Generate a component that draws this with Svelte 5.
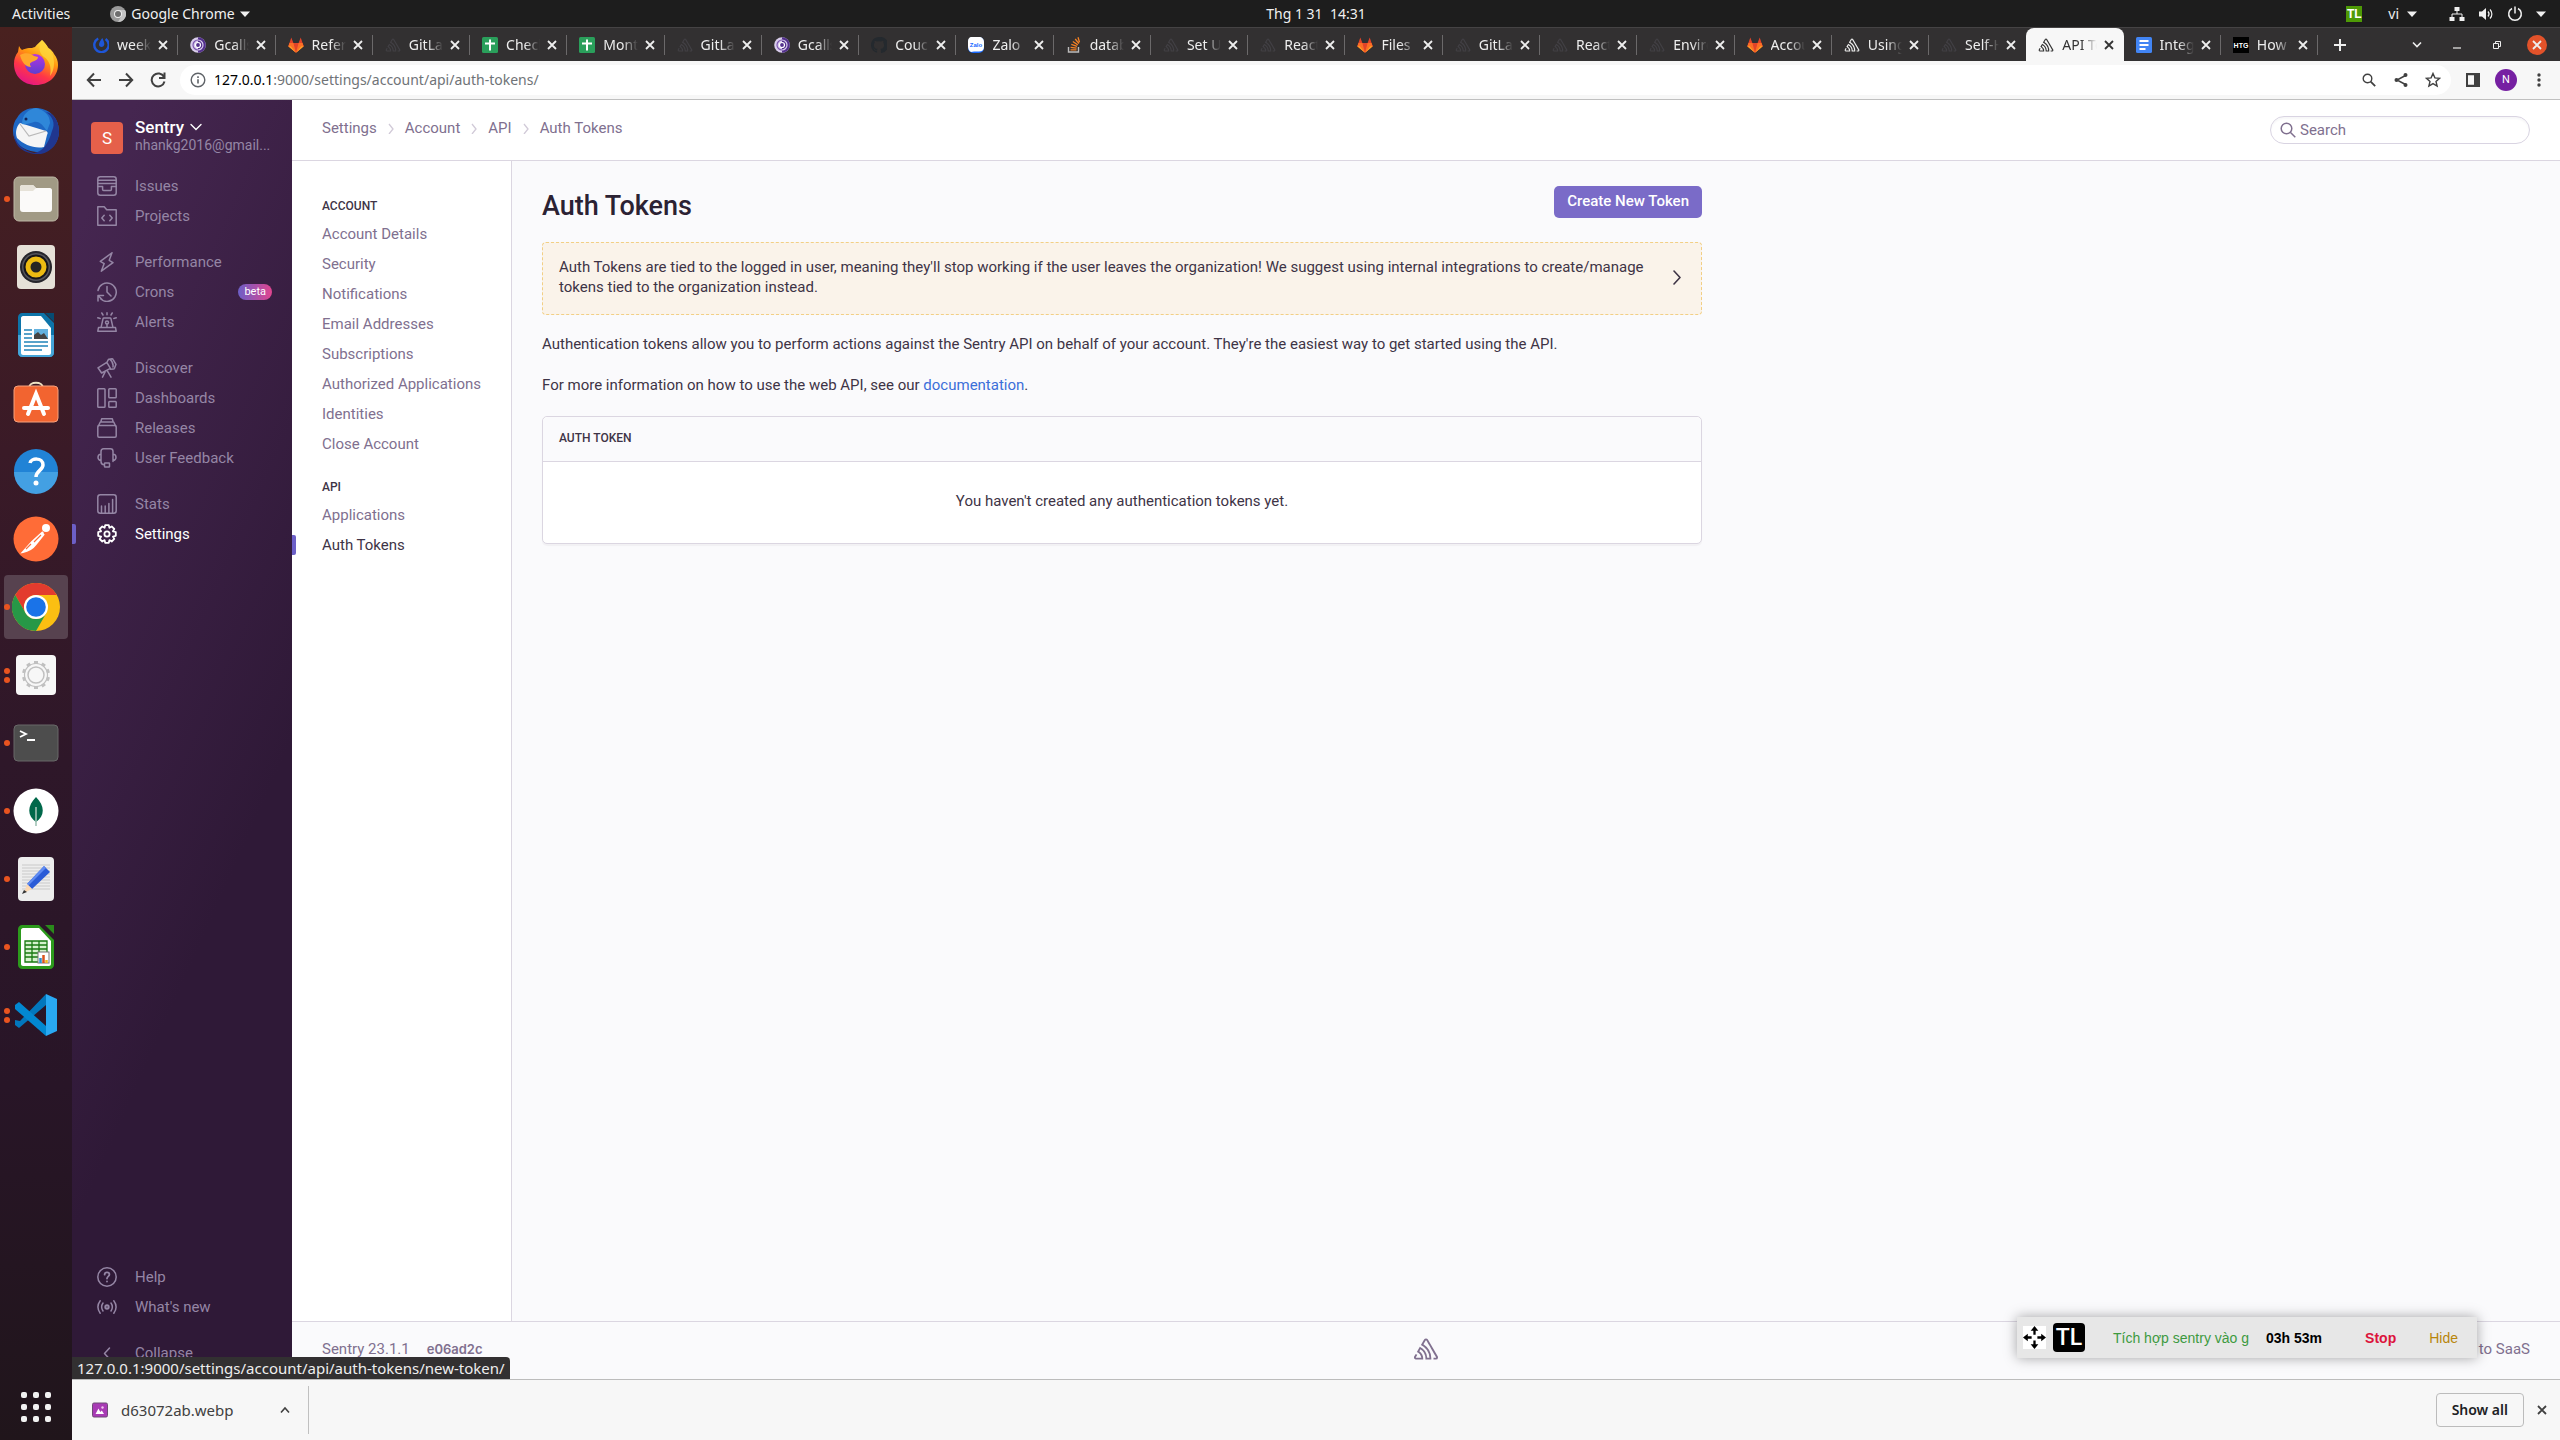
<script>
  const tabs = [
    ['mattermost', 'weekly'], ['gcall', 'Gcalls'], ['gitlab', 'Refere'], ['sentry-dark', 'GitLab'],
    ['sheets', 'Check'], ['sheets', 'Month'], ['sentry-dark', 'GitLab'], ['gcall', 'Gcalls'],
    ['github', 'Couch'], ['zalo', 'Zalo'], ['stack', 'datab'], ['sentry-dark', 'Set Up'],
    ['sentry-dark', 'React'], ['gitlab', 'Files'], ['sentry-dark', 'GitLab'], ['sentry-dark', 'React'],
    ['sentry-dark', 'Enviro'], ['gitlab', 'Accou'], ['sentry', 'Using'], ['sentry-dark', 'Self-H'],
    ['sentry', 'API To'], ['docs', 'Integr'], ['htg', 'How t']
  ];
  const activeTab = 20;

  const apps = [
    ['firefox', 'Firefox', 0], ['thunderbird', 'Thunderbird', 0], ['files', 'Files', 1],
    ['rhythmbox', 'Rhythmbox', 0], ['writer', 'Writer', 0], ['software', 'Software', 0],
    ['help', 'Help', 0], ['postman', 'Postman', 0], ['chrome', 'Chrome', 1],
    ['tools', 'Settings', 2], ['terminal', 'Terminal', 1], ['mongo', 'Compass', 1],
    ['editor', 'Text Editor', 1], ['calc', 'Calc', 1], ['code', 'Code', 2]
  ];

  const groups = [
    ['Issues', 'Projects'],
    ['Performance', 'Crons', 'Alerts'],
    ['Discover', 'Dashboards', 'Releases', 'User Feedback'],
    ['Stats', 'Settings']
  ];

  const crumbs = ['Settings', 'Account', 'API', 'Auth Tokens'];
  const sections = [
    ['Account', ['Account Details', 'Security', 'Notifications', 'Email Addresses', 'Subscriptions', 'Authorized Applications', 'Identities', 'Close Account']],
    ['API', ['Applications', 'Auth Tokens']]
  ];
  const gearTeeth = [0, 36, 72, 108, 144, 180, 216, 252, 288, 324];
</script>

{#snippet sentryMark()}
  <path fill="currentColor" d="M29 2.26a4.67 4.67 0 0 0-8 0l-6.58 11.27a32.21 32.21 0 0 1 17.75 26.66h-4.62A27.68 27.68 0 0 0 12.09 17.47L6 28a15.92 15.92 0 0 1 9.23 12.17H4.62a.76.76 0 0 1-.62-1.11l2.94-5a10.74 10.74 0 0 0-3.36-1.9l-2.91 5a4.54 4.54 0 0 0 1.69 6.24A4.66 4.66 0 0 0 4.62 44h14.53a19.4 19.4 0 0 0-8-17.31l2.31-4A23.87 23.87 0 0 1 23.76 44h12.31a35.88 35.88 0 0 0-16.41-31.8l4.67-8a.77.77 0 0 1 1.05-.27c.53.29 20.29 34.77 20.66 35.17a.76.76 0 0 1-.68 1.13H40.6q.09 1.91 0 3.81h4.78A4.59 4.59 0 0 0 50 39.43a4.49 4.49 0 0 0-.62-2.28Z" />
{/snippet}

{#snippet cross()}
  <svg class="i10" viewBox="0 0 10 10" aria-hidden="true"><path d="M1 1l8 8M9 1L1 9" fill="none" stroke="currentColor" stroke-width="1.8" /></svg>
{/snippet}

{#snippet caret()}
  <svg class="i10" viewBox="0 0 10 10" aria-hidden="true"><path d="M0 2.5h10L5 8z" fill="currentColor" /></svg>
{/snippet}

{#snippet favicon(kind)}
  {#if kind === 'sentry' || kind === 'sentry-dark'}
    <svg class="i16 {kind}" viewBox="-2 -2 54 48" aria-hidden="true">{@render sentryMark()}</svg>
  {:else if kind === 'mattermost'}
    <svg class="i16" viewBox="0 0 16 16" aria-hidden="true"><path d="M5.2 1.5A7.2 7.2 0 1 0 12.6 2" fill="none" stroke="#1e56d8" stroke-width="2.4" /><path d="M9.3 1c1.6 3.3 2.4 5.5 1.9 7.100-.9 2.700-4.900 2.400-5.200-.4C5.900 5.700 7.600 3.300 9.300 1z" fill="#1e56d8" /></svg>
  {:else if kind === 'gcall'}
    <svg class="i16" viewBox="0 0 16 16" aria-hidden="true"><circle cx="8" cy="8" r="7.8" fill="#d9cdec" /><path d="M8 .2a7.8 7.8 0 0 1 0 15.6z" fill="#53308c" /><path d="M8 3a5 5 0 0 0 0 10" fill="none" stroke="#7c56b0" stroke-width="1.2" /><path d="M8 3a5 5 0 0 1 0 10" fill="none" stroke="#d9cdec" stroke-width="1.2" /><circle cx="8" cy="8" r="2.5" fill="#53308c" stroke="#fff" stroke-width="1.2" /></svg>
  {:else if kind === 'gitlab'}
    <svg class="i16" viewBox="0 0 16 16" aria-hidden="true"><path d="M3.3.4L.3 9.2 8 15.7l7.7-6.500L12.7.4 10.6 6H5.400z" fill="#e24329" /><path d="M.3 9.2L1.5 6h3.900L8 15.700zM15.700 9.200L14.500 6h-3.900L8 15.700z" fill="#fc6d26" /><path d="M.3 9.200l2.500 0L8 15.700zM15.700 9.200h-2.500L8 15.700z" fill="#fca326" /></svg>
  {:else if kind === 'sheets'}
    <svg class="i16" viewBox="0 0 16 16" aria-hidden="true"><rect width="16" height="16" rx="1.5" fill="#2a9f5b" /><path d="M8 2.500v11M3 6.500h10" stroke="#fff" stroke-width="2" /></svg>
  {:else if kind === 'github'}
    <svg class="i16" viewBox="0 0 16 16" aria-hidden="true"><path fill="#24292e" d="M8 0C3.580 0 0 3.580 0 8c0 3.540 2.290 6.530 5.470 7.590.4.070.55-.17.55-.38v-1.490c-2.010.37-2.530-.49-2.690-.94-.36-.92-1.100-1.400-1.100-1.400.6-.2 1.200.4 1.900 1.300.7.700 1.400.6 1.900.3.100-.5.300-.9.500-1.100-1.780-.2-3.640-.89-3.640-3.950 0-.87.310-1.590.82-2.150-.3-.7-.2-1.500.08-2.120 0 0 .67-.21 2.200.82a7.600 7.600 0 0 1 4 0c1.530-1.040 2.200-.82 2.200-.82.440 1.100.16 1.920.08 2.120.51.560.82 1.270.82 2.150 0 3.070-1.870 3.750-3.650 3.950.4.500.54 1 .54 1.480v2.200c0 .21.150.46.55.38A8 8 0 0 0 8 0z" /></svg>
  {:else if kind === 'zalo'}
    <svg class="i16" viewBox="0 0 16 16" aria-hidden="true"><rect width="16" height="16" rx="5" fill="#1668ff" /><path d="M4 0h7c3 0 5 2 5 5v5c0 3-2 4.500-5 4.500H6L3 15C1 14 0 12 0 9V5c0-3 1-5 4-5z" fill="#fff" /><text x="8" y="10" text-anchor="middle" class="zalo">Zalo</text></svg>
  {:else if kind === 'stack'}
    <svg class="i16" viewBox="0 0 16 16" aria-hidden="true"><path d="M2.500 10v5h10v-5" fill="none" stroke="#bcbbbb" stroke-width="1.4" /><path d="M4.500 12.800h6M4.600 10.300l6 .8M5.300 7.300l5.700 2M6.800 4.500l5 3.400M9.200 2l3.800 4.500M12 .3l1.500 5" stroke="#f48024" stroke-width="1.3" /></svg>
  {:else if kind === 'docs'}
    <svg class="i16" viewBox="0 0 16 16" aria-hidden="true"><rect width="16" height="16" rx="1.5" fill="#4285f4" /><path d="M3.500 4h9M3.500 8h9M3.500 12h6" stroke="#fff" stroke-width="2" /></svg>
  {:else}
    <svg class="i16" viewBox="0 0 16 16" aria-hidden="true"><rect width="16" height="16" fill="#000" /><text x="8" y="11" text-anchor="middle" class="htg">HTG</text></svg>
  {/if}
{/snippet}

{#snippet appIcon(kind)}
  <svg class="i48" viewBox="0 0 48 48" aria-hidden="true">
    {#if kind === 'firefox'}
      <defs>
        <linearGradient id="ff" x1=".8" y1="0" x2=".3" y2="1"><stop offset="0" stop-color="#fff44f" /><stop offset=".4" stop-color="#ff980e" /><stop offset=".7" stop-color="#ff3647" /><stop offset="1" stop-color="#e31587" /></linearGradient>
        <linearGradient id="ffg" x1="0" y1="0" x2="0" y2="1"><stop offset="0" stop-color="#b833e1" /><stop offset="1" stop-color="#5b3fd0" /></linearGradient>
      </defs>
      <path d="M30 1c3 3 5 5 6 8 3 1 5 4 6 6 3 4 4 7 4 11 0 11-9 20-22 20S2 37 2 25c0-5 1-8 4-12l1-6c1 2 2 3 3 4 2-1 5-2 7-2 3 0 3 0 6-1 2-3 5-5 7-7z" fill="url(#ff)" />
      <path d="M30 1c3 4 9 9 11 16s1 15-3 20c2-9-1-16-6-19-5-4-6-10-2-17z" fill="#ffd43a" opacity=".8" />
      <circle cx="23" cy="25" r="10" fill="url(#ffg)" />
      <path d="M8 16c5-3 11-2 14 1l4 1c0 3-4 4-6 5-3 1-2 3-1 5-5 0-9-4-11-12z" fill="#ffa72b" />
    {:else if kind === 'thunderbird'}
      <path d="M24 1c12 0 23 9 23 23 0 11-7 20-18 22-2-1-4-1-5-1C9 43 1 35 1 24 1 18 3 13 5 11 9 4 15 1 24 1z" fill="#1e67c4" />
      <path d="M2 24c0 12 10 20 20 22 8-1 14-8 18-22 4-8 0-15-6-19 9 1 13 11 13 20 0 11-8 20-18 22C13 48 1 40 2 24z" fill="#20368f" />
      <path d="M8 16l26 8c2 1 2 2 1 4l-3 12c-9 2-20-2-27-9-2-5-1-11 3-15z" fill="#f5f5f5" /><path d="M8 17l9 12 17-5" fill="none" stroke="#b9b9b9" stroke-width="1.2" />
      <path d="M10 17C10 7 17 2 24 1c8 2 14 7 14 15l-3 8c-4-5-7-10-13-9-4 1-8 3-12 2z" fill="#2f87d9" /><circle cx="14" cy="12" r="1.5" fill="#10245c" />
    {:else if kind === 'files'}
      <rect x="2" y="2" width="44" height="44" rx="5" fill="#a19a85" stroke="#bdb7a5" /><path d="M8 12c0-1 1-2 2-2h11l3 3h14c1 0 2 1 2 2v19c0 2-1 3-3 3H11c-2 0-3-1-3-3z" fill="#fbfaf9" /><path d="M8 12c0-1 1-2 2-2h11l3 3-3 3H8z" fill="#e6e2d8" />
    {:else if kind === 'rhythmbox'}
      <rect x="5" y="2" width="38" height="44" rx="4" fill="#e6e1d8" /><circle cx="24" cy="24" r="16" fill="#26252b" /><circle cx="24" cy="24" r="14" fill="#55555c" /><circle cx="24" cy="24" r="11.5" fill="#edbb12" stroke="#17161b" stroke-width="2" /><circle cx="24" cy="24" r="5.5" fill="#262523" />
    {:else if kind === 'writer'}
      <path d="M10 2h22l10 10v30c0 2-2 4-4 4H10c-2 0-4-2-4-4V6c0-2 2-4 4-4z" fill="#0d74a9" /><path d="M6 24h36v18c0 2-2 4-4 4H10c-2 0-4-2-4-4z" fill="#45a5d8" /><path d="M11 5h18l10 12v25c0 1-1 2-2 2H11c-1 0-2-1-2-2V7c0-1 1-2 2-2z" fill="#fff" /><path d="M33 2h9v9z" fill="#064b72" /><path d="M12 19h8M12 23h8M12 27h8M12 31h24M12 35h24M12 39h18" stroke="#2084b9" stroke-width="1.6" /><rect x="22" y="18" width="14" height="10" fill="#64b2df" /><path d="M22 28v-4l4-3 3 3 3-2 4 6z" fill="#444" />
    {:else if kind === 'software'}
      <path d="M17 9c0-7 14-7 14 0" fill="none" stroke="#efe4c4" stroke-width="2" /><rect x="2" y="7" width="44" height="36" rx="4" fill="#f26430" stroke="#f7a17c" /><path d="M16 35L24 15l8 20M12 29h24" fill="none" stroke="#fff" stroke-width="4" stroke-linecap="round" />
    {:else if kind === 'help'}
      <circle cx="24" cy="24" r="22" fill="#2183d6" /><path d="M2 25h44a22 22 0 0 1-44 0z" fill="#43a0e3" /><path d="M18 16c1-5 13-6 13 2 0 5-7 6-7 12" fill="none" stroke="#fff" stroke-width="3.5" /><circle cx="24" cy="36" r="2.5" fill="#fff" />
    {:else if kind === 'postman'}
      <circle cx="24" cy="24" r="22.5" fill="#ff6c37" /><circle cx="34" cy="13" r="4" fill="#fff" /><path d="M31 17L20 27l-9 10c6-1 10-4 13-8l8-10" fill="#fff" stroke="#fff" stroke-width="2" /><path d="M22 27l7-7M19 29l-5 5" stroke="#ff6c37" stroke-width="1.2" />
    {:else if kind === 'chrome'}
      <circle cx="24" cy="24" r="24" fill="#fbbf12" /><path d="M3.2 12A24 24 0 0 1 44.8 12H24a12 12 0 0 0-10.400 18z" fill="#e33b2e" /><path d="M3.2 12A24 24 0 0 0 24 48l10.400-18a12 12 0 0 1-20.800 0z" fill="#279847" /><circle cx="24" cy="24" r="12" fill="#fff" /><circle cx="24" cy="24" r="9.8" fill="#1a73e8" />
    {:else if kind === 'tools'}
      <rect x="4" y="4" width="40" height="40" rx="4" fill="#f7f7f7" /><circle cx="24" cy="24" r="11.5" fill="none" stroke="#c0c0c0" stroke-width="1.2" /><circle cx="24" cy="24" r="8" fill="none" stroke="#c0c0c0" stroke-width="1.5" />
      {#each gearTeeth as a}<rect x="22" y="10" width="4" height="3" fill="#c0c0c0" transform="rotate({a} 24 24)" />{/each}
    {:else if kind === 'terminal'}
      <rect x="2" y="6" width="44" height="36" rx="4" fill="#4d4d4d" stroke="#686868" /><path d="M8 12l6 3-6 3M15 21h8" fill="none" stroke="#fff" stroke-width="1.8" />
    {:else if kind === 'mongo'}
      <circle cx="24" cy="24" r="22.5" fill="#fff" /><path d="M24 10c9 9 9 19 0 25-9-6-9-16 0-25z" fill="#00684a" /><path d="M24 20v19" stroke="#9fc2b4" stroke-width="1.6" />
    {:else if kind === 'editor'}
      <rect x="6" y="2" width="36" height="44" rx="4" fill="#ededed" /><path d="M10 10h28M10 13h28M10 16h28M10 19h28M10 22h28M10 25h28M10 28h28M10 31h28M10 34h28" stroke="#c9c9c9" /><path d="M32 11l6 6-18 17-5-5z" fill="#2a5bd7" /><path d="M32 11l2 2-18 18-1-2z" fill="#5f8bf2" /><path d="M15 29l5 5-8 4z" fill="#fbd9b5" /><path d="M12 35l3 2-5 2z" fill="#333" />
    {:else if kind === 'calc'}
      <path d="M10 2h17l15 15v25c0 2-2 4-4 4H10c-2 0-4-2-4-4V6c0-2 2-4 4-4z" fill="#2c9a1c" /><path d="M11 5h16l12 13v23c0 1-1 2-2 2H11c-1 0-2-1-2-2V7c0-1 1-2 2-2z" fill="#fff" /><path d="M33 2h9v9z" fill="#2a8a1b" /><rect x="13" y="18" width="22" height="21" fill="#d5f2cc" /><path d="M13 18h22v21H13zM13 22h22M13 26h22M13 30h22M13 34h22M20 18v21M27 18v21" fill="none" stroke="#187a10" stroke-width="1.3" /><rect x="26" y="29" width="11" height="11" fill="#fff" stroke="#777" /><path d="M28.5 40v-5" stroke="#2f8fd0" stroke-width="2.5" /><path d="M31.5 40v-8" stroke="#d9541e" stroke-width="2.5" /><path d="M34.5 40v-3" stroke="#f0b81c" stroke-width="2.5" />
    {:else}
      <path d="M34 3L8 30l-5-1v5l4 3 27-23z" fill="#0277bd" /><path d="M3 18v-4l4-3 27 24v10L3 18z" fill="#0288d1" /><path d="M34 3l11 5v32l-11 5z" fill="#29a9f3" />
    {/if}
  </svg>
{/snippet}

{#snippet navIcon(kind)}
  <svg class="i20" viewBox="0 0 20 20" aria-hidden="true" fill="none" stroke="currentColor" stroke-width="1.5" stroke-linecap="round" stroke-linejoin="round">
    {#if kind === 'Issues'}
      <rect x=".8" y=".8" width="18.4" height="18.4" rx="2.5" /><path d="M1 4.200h18M1 7.400h18M1 10.600h4.600v2.800c0 .6.400 1 1 1h6.800c.6 0 1-.4 1-1v-2.800H19" />
    {:else if kind === 'Projects'}
      <path d="M.8 .8h6.400l2.500 3h9.500v15.400H.8z" /><path d="M7.200 9.200L4.800 12l2.400 2.800M12.800 9.200l2.400 2.800-2.400 2.800" />
    {:else if kind === 'Performance'}
      <path d="M15 .8L3.300 9.300l3.900 2.300L4.300 19.200 16 10.600l-3.800-2.300z" />
    {:else if kind === 'Crons'}
      <path d="M1 8.500A9.200 9.200 0 1 1 3.800 17M10 4.500v5.500l4 4M1 19v-5.500h5.500M1 13.500l4 4" />
    {:else if kind === 'Alerts'}
      <path d="M1.500 15.600h17l.7 3.600H.8zM4 15.600L6 6.800c.1-.6.500-.8 1-.8h6c.5 0 .9.200 1 .8l2 8.800M10 .8v2M4.800 1l1.200 2M15.200 1L14 3M.8 5.800l2.400.6M19.200 5.800l-2.400.6" /><circle cx="10" cy="10.500" r="1.500" /><path d="M10 12v3" />
    {:else if kind === 'Discover'}
      <path d="M1 9.800l8.800-5.500 3.600 6-8.800 4.700zM9.800 4.500l1.400-2.700c.2-.3.500-.5.800-.6l3-.4c.4 0 .8.100 1 .5l3 5-1.500 4c-.2.400-.5.700-1 .7l-3 .2M13 1.500c2 1.500 3.500 4 3 7.500M5.500 19.200l2.500-5M14 19.200l-3.500-6" />
    {:else if kind === 'Dashboards'}
      <rect x=".8" y=".8" width="7.200" height="18.4" rx=".8" /><rect x="11.800" y=".8" width="7.400" height="9" rx=".8" /><rect x="11.800" y="13.500" width="7.400" height="5.700" rx=".8" />
    {:else if kind === 'Releases'}
      <rect x=".8" y="7.500" width="18.4" height="11.700" rx="1.200" /><path d="M1.500 7.800L3.300 4h13.400l1.800 3.800M3.800 4l.9-3.200h10.600l.9 3.200" />
    {:else if kind === 'User Feedback'}
      <path d="M4 13.500V3.500C4 2 5 .8 6.500 .8h7C15 .8 16 2 16 3.500v10M4 6.200c-4 0-4 6.300 0 6.300zM16 6.200c4 0 4 6.300 0 6.300zM4 13.500c0 2 1 3.200 3.200 3.200" /><rect x="7.500" y="15" width="5" height="4" rx=".6" />
    {:else if kind === 'Stats'}
      <rect x=".8" y=".8" width="18.4" height="18.400" rx="2.500" /><path d="M4.500 19v-7M8.200 19v-7M11.900 19V9.500M15.600 19V5.500" />
    {:else if kind === 'Settings'}
      <path stroke-width="1.8" d="M8.200 1.200h3.600l.6 2.600 2.300-1.400 2.600 2.600-1.400 2.300 2.900.7v3.800l-2.900.7 1.400 2.400-2.600 2.600-2.300-1.400-.6 2.700H8.200l-.6-2.700-2.300 1.400L2.700 15l1.400-2.400-2.900-.7V8l2.900-.7L2.700 5l2.600-2.600 2.300 1.400z" /><circle cx="10" cy="10" r="2.6" stroke-width="1.8" />
    {:else if kind === 'Help'}
      <circle cx="10" cy="10" r="9.2" /><path d="M7.600 7.600c.2-3 4.800-2.800 4.800 0 0 1.800-2.400 1.800-2.400 4M10 14.300v.2" stroke-width="1.8" />
    {:else if kind === "What's new"}
      <circle cx="10" cy="10" r="1.700" stroke-width="2" /><path d="M3.200 3.800c-2.800 3.800-2.800 8.600 0 12.400M16.800 3.800c2.800 3.800 2.800 8.600 0 12.400M6 6c-1.700 2.500-1.700 5.500 0 8M14 6c1.700 2.500 1.700 5.500 0 8" />
    {:else}
      <path d="M12.500 5l-5 5.500 5 5.500" />
    {/if}
  </svg>
{/snippet}

{#snippet navItem(name)}
  <a class="nav-item" class:current={name === 'Settings'} href="#{name}">
    {@render navIcon(name)}<span>{name}</span>
    {#if name === 'Crons'}<em class="beta">beta</em>{/if}
  </a>
{/snippet}

<div class="desktop">
  <header class="topbar">
    <div class="top-left">
      <button>Activities</button>
      <button class="app-menu">
        <svg class="i16" viewBox="0 0 16 16" aria-hidden="true"><circle cx="8" cy="8" r="8" fill="#9a9a9a" /><path d="M8 4h7A8 8 0 0 1 8 16l3.500-6z" fill="#c4c4c4" /><circle cx="8" cy="8" r="4" fill="#eee" /><circle cx="8" cy="8" r="3" fill="#6e6e6e" /></svg>
        Google Chrome {@render caret()}
      </button>
    </div>
    <time>Thg 1 31&nbsp; 14:31</time>
    <div class="top-right">
      <span class="tl-tray">TL</span>
      <button class="lang">vi {@render caret()}</button>
      <button class="system" aria-label="System menu">
        <svg class="i16" viewBox="0 0 16 16" aria-hidden="true"><path d="M5.500 1h5v4h-5zM.5 11h5v4h-5zM10.500 11h5v4h-5z" fill="currentColor" /><path d="M8 5v3M3 11V8h10v3" fill="none" stroke="currentColor" /></svg>
        <svg class="i16" viewBox="0 0 16 16" aria-hidden="true"><path d="M1 5.500h3L8 2v12l-4-3.500H1z" fill="currentColor" /><path d="M10 5.500c1.300 1.500 1.300 3.500 0 5M12 3.500c2.500 2.600 2.500 6.400 0 9" fill="none" stroke="currentColor" stroke-width="1.2" /></svg>
        <svg class="i16" viewBox="0 0 16 16" aria-hidden="true"><path d="M5 2.500a6.300 6.300 0 1 0 6 0M8 .5v7" fill="none" stroke="currentColor" stroke-width="1.5" /></svg>
        {@render caret()}
      </button>
    </div>
  </header>

  <div class="workspace">
    <nav class="dock" aria-label="Applications">
      {#each apps as [kind, label, windows]}
        <button class="dock-item" class:focused={kind === 'chrome'} aria-label={label}>
          <span class="dots">{#each { length: windows } as _}<i></i>{/each}</span>
          {@render appIcon(kind)}
        </button>
      {/each}
      <button class="launcher" aria-label="Show applications">
        {#each { length: 9 } as _}<i></i>{/each}
      </button>
    </nav>

    <div class="browser">
      <div class="tabstrip">
        <div class="tabs">
          {#each tabs as [icon, title], i}
            <div class="tab" class:active={i === activeTab} class:plain={i === activeTab - 1}>
              <a href="#tab{i}">{@render favicon(icon)}<span>{title}</span></a>
              <button aria-label="Close tab">{@render cross()}</button>
            </div>
          {/each}
        </div>
        <div class="window-controls">
          <button aria-label="New tab"><svg class="i16" viewBox="0 0 16 16" aria-hidden="true"><path d="M8 2v12M2 8h12" stroke="currentColor" stroke-width="2" /></svg></button>
          <div class="buttons">
            <button aria-label="Search tabs"><svg class="i10" viewBox="0 0 10 10" aria-hidden="true"><path d="M1 2.500l4 4 4-4" fill="none" stroke="currentColor" stroke-width="1.6" /></svg></button>
            <button aria-label="Minimise"><svg class="i10" viewBox="0 0 10 10" aria-hidden="true"><path d="M1 8h8" stroke="currentColor" stroke-width="1.2" /></svg></button>
            <button aria-label="Restore"><svg class="i10" viewBox="0 0 10 10" aria-hidden="true"><path d="M1.500 3.500h5v5h-5zM3.500 3V1.500h5v5H7" fill="none" stroke="currentColor" /></svg></button>
            <button class="close" aria-label="Close window">{@render cross()}</button>
          </div>
        </div>
      </div>

      <div class="toolbar">
        <button aria-label="Back"><svg class="i16" viewBox="0 0 16 16" aria-hidden="true"><path d="M15 8H2M8 1.500L1.800 8 8 14.500" fill="none" stroke="currentColor" stroke-width="2" /></svg></button>
        <button aria-label="Forward"><svg class="i16" viewBox="0 0 16 16" aria-hidden="true"><path d="M1 8h13M8 1.500L14.200 8 8 14.500" fill="none" stroke="currentColor" stroke-width="2" /></svg></button>
        <button aria-label="Reload"><svg class="i16" viewBox="0 0 16 16" aria-hidden="true"><path d="M14 5A6.500 6.500 0 1 0 14.500 9.500M14.500.5V6H9" fill="none" stroke="currentColor" stroke-width="2" /></svg></button>
        <div class="omnibox">
          <svg class="i16" viewBox="0 0 16 16" aria-hidden="true"><circle cx="8" cy="8" r="6.8" fill="none" stroke="#5f6368" stroke-width="1.4" /><path d="M8 7.200v4.300M8 4.300v1.600" stroke="#5f6368" stroke-width="1.6" /></svg>
          <span class="url"><b>127.0.0.1</b>:9000/settings/account/api/auth-tokens/</span>
          <div class="omni-actions">
            <button aria-label="Zoom"><svg class="i16" viewBox="0 0 16 16" aria-hidden="true"><circle cx="6.5" cy="6.5" r="4.3" fill="none" stroke="currentColor" stroke-width="1.4" /><path d="M9.700 9.700l4.500 4.500" stroke="currentColor" stroke-width="1.8" /></svg></button>
            <button aria-label="Share"><svg class="i16" viewBox="0 0 16 16" aria-hidden="true"><path d="M12.500 3.500L4 8l8.500 4.500" fill="none" stroke="currentColor" stroke-width="1.5" /><circle cx="12.5" cy="3" r="2" fill="currentColor" /><circle cx="3.5" cy="8" r="2" fill="currentColor" /><circle cx="12.5" cy="13" r="2" fill="currentColor" /></svg></button>
            <button aria-label="Bookmark"><svg class="i16" viewBox="0 0 16 16" aria-hidden="true"><path d="M8 1.500l1.900 4.400 4.700.4-3.600 3.100 1.100 4.600L8 11.600 3.900 14 5 9.400 1.400 6.300l4.700-.4z" fill="none" stroke="currentColor" stroke-width="1.4" /></svg></button>
          </div>
        </div>
        <div class="profile">
          <button aria-label="Side panel"><svg class="i16" viewBox="0 0 16 16" aria-hidden="true"><path d="M1 1h14v14H1zM3 3.300v9.400h6V3.300z" fill="currentColor" fill-rule="evenodd" /></svg></button>
          <button class="avatar">N</button>
          <button aria-label="Menu"><svg class="i16" viewBox="0 0 16 16" aria-hidden="true"><circle cx="8" cy="3" r="1.7" fill="currentColor" /><circle cx="8" cy="8" r="1.7" fill="currentColor" /><circle cx="8" cy="13" r="1.7" fill="currentColor" /></svg></button>
        </div>
      </div>

      <div class="page">
        <aside class="sidebar">
          <button class="org">
            <span class="org-avatar">S</span>
            <span class="org-text">
              <strong>Sentry <svg class="i12" viewBox="0 0 12 12" aria-hidden="true"><path d="M1 3.500l5 5 5-5" fill="none" stroke="currentColor" stroke-width="1.4" stroke-linecap="round" /></svg></strong>
              <small>nhankg2016@gmail...</small>
            </span>
          </button>
          {#each groups as group}
            <nav class="nav-group">
              {#each group as name}{@render navItem(name)}{/each}
            </nav>
          {/each}
          <nav class="nav-group bottom">
            {@render navItem('Help')}
            {@render navItem("What's new")}
          </nav>
          <nav class="nav-group">{@render navItem('Collapse')}</nav>
        </aside>

        <div class="app">
          <header class="app-header">
            <nav class="crumbs">
              {#each crumbs as crumb, i}
                {#if i}<svg class="i12" viewBox="0 0 12 12" aria-hidden="true"><path d="M4 2l4 5-4 5" fill="none" stroke="#d1cad8" stroke-width="1.3" /></svg>{/if}
                <a href="#{crumb}">{crumb}</a>
              {/each}
            </nav>
            <label class="search">
              <svg class="i16" viewBox="0 0 16 16" aria-hidden="true"><circle cx="6.5" cy="6.5" r="5.3" fill="none" stroke="currentColor" stroke-width="1.5" /><path d="M10.300 10.300l5 5" stroke="currentColor" stroke-width="1.5" /></svg>
              <input type="text" placeholder="Search" aria-label="Search" />
            </label>
          </header>

          <div class="columns">
            <nav class="subnav">
              {#each sections as [heading, items]}
                <section>
                  <h2>{heading}</h2>
                  {#each items as item}<a href="#{item}" class:current={item === 'Auth Tokens'}>{item}</a>{/each}
                </section>
              {/each}
            </nav>

            <main>
              <div class="title-row">
                <h1>Auth Tokens</h1>
                <button class="primary">Create New Token</button>
              </div>
              <a class="notice" href="#integrations">
                <span>Auth Tokens are tied to the logged in user, meaning they'll stop working if the user leaves the organization! We suggest using internal integrations to create/manage tokens tied to the organization instead.</span>
                <svg class="i16" viewBox="0 0 16 16" aria-hidden="true"><path d="M5 2l6 6.500L5 15" fill="none" stroke="currentColor" stroke-width="1.6" stroke-linecap="round" stroke-linejoin="round" /></svg>
              </a>
              <p>Authentication tokens allow you to perform actions against the Sentry API on behalf of your account. They're the easiest way to get started using the API.</p>
              <p>For more information on how to use the web API, see our <a href="#docs">documentation</a>.</p>
              <table class="panel">
                <thead><tr><th>Auth Token</th></tr></thead>
                <tbody><tr><td>You haven't created any authentication tokens yet.</td></tr></tbody>
              </table>
            </main>
          </div>

          <footer>
            <div class="version"><span>Sentry 23.1.1</span><a href="#build">e06ad2c</a></div>
            <svg class="foot-logo" viewBox="0 0 50 44" aria-hidden="true">{@render sentryMark()}</svg>
            <a class="migrate" href="#saas">to SaaS</a>
          </footer>
        </div>

        <div class="timer">
          <svg class="move" viewBox="0 0 24 24" aria-hidden="true"><rect width="24" height="24" fill="#fff" /><path d="M12 0l4 5h-2.800v4h-2.400V5H8zM12 24l4-5h-2.800v-4h-2.400v4H8zM0 12l5-4v2.800h4v2.400H5V16zM24 12l-5-4v2.800h-4v2.400h4V16z" fill="#000" /></svg>
          <span class="tl-logo">TL</span>
          <span class="task">Tích hợp sentry vào g</span>
          <b>03h 53m</b>
          <button class="stop">Stop</button>
          <button class="hide">Hide</button>
        </div>
        <div class="status">127.0.0.1:9000/settings/account/api/auth-tokens/new-token/</div>
      </div>

      <div class="downloads">
        <div class="file">
          <svg class="i16" viewBox="0 0 16 16" aria-hidden="true"><rect x=".5" y="1" width="15" height="14" rx="1.5" fill="#a83bb5" stroke="#6f4a76" /><path d="M3.500 12L6.500 6.500 8.300 10l1.500-1.500L12 12z" fill="#fff" /><circle cx="10.5" cy="5.5" r="1.2" fill="#f3c5ee" /></svg>
          <span>d63072ab.webp</span>
          <button aria-label="File options"><svg class="i10" viewBox="0 0 10 10" aria-hidden="true"><path d="M1 7.500l4-4.500 4 4.500" fill="none" stroke="currentColor" stroke-width="1.6" /></svg></button>
        </div>
        <div class="download-actions">
          <button class="show-all">Show all</button>
          <button aria-label="Close downloads">{@render cross()}</button>
        </div>
      </div>
    </div>
  </div>
</div>

<style>
  :global(body) { margin: 0; }
  * { box-sizing: border-box; }
  button { border: 0; padding: 0; background: none; font: inherit; color: inherit; display: flex; align-items: center; justify-content: center; flex: none; }
  a { color: inherit; text-decoration: none; }
  svg { flex: none; display: block; }
  .i10 { width: 10px; height: 10px; }
  .i12 { width: 12px; height: 12px; }
  .i16 { width: 16px; height: 16px; }
  .i20 { width: 20px; height: 20px; }
  .i48 { width: 48px; height: 48px; }

  .desktop { min-height: 100vh; display: flex; flex-direction: column; font: 14px/20px "Noto Sans", sans-serif; }

  .topbar { height: 27px; display: grid; grid-template-columns: 1fr auto 1fr; align-items: center; background: #1d1d1d; color: #f0f0f0; padding: 0 12px; }
  .topbar time { padding-left: 72px; }
  .top-left, .top-right, .system, .lang, .app-menu { display: flex; align-items: center; }
  .top-left { gap: 40px; }
  .app-menu { gap: 5px; }
  .top-right { justify-content: flex-end; }
  .tl-tray { width: 16px; height: 16px; background: #4e9a06; color: #fff; font: bold 12px/16px "Liberation Sans", sans-serif; text-align: center; }
  .lang { gap: 8px; margin-left: 26px; }
  .system { gap: 13px; margin-left: 32px; margin-right: 2px; }

  .workspace { flex: 1; display: flex; }
  .dock { width: 72px; flex: none; display: flex; flex-direction: column; background: linear-gradient(#49211f, #3a1a27 30%, #2e1729 52%, #281527 75%, #20151b); padding: 4px; }
  .dock-item { height: 64px; margin-bottom: 4px; border-radius: 4px; justify-content: flex-start; gap: 2px; }
  .dock-item.focused { background: #57424f; }
  .dots { width: 6px; display: grid; gap: 3px; }
  .dots i { width: 6px; height: 6px; border-radius: 50%; background: #e95420; }
  .launcher { margin-top: auto; margin-bottom: 14px; align-self: center; width: 30px; display: grid; grid-template-columns: repeat(3, 6px); gap: 6px; }
  .launcher i { width: 6px; height: 6px; border-radius: 2px; background: #f2f2f2; }

  .browser { flex: 1; min-width: 0; display: flex; flex-direction: column; }
  .tabstrip { height: 34px; background: #323031; border-top: 1px solid #454344; display: flex; color: #eee; }
  .tabs { flex: 1; min-width: 0; display: flex; padding-left: 9px; }
  .tab { flex: 1 1 0; min-width: 0; display: flex; align-items: center; padding: 0 7px 0 12px; position: relative; }
  .tab::after { content: ""; position: absolute; right: 0; top: 7px; width: 1px; height: 20px; background: #6b696a; }
  .tab.plain::after, .tab.active::after { display: none; }
  .tab a { flex: 1; min-width: 0; display: flex; align-items: center; gap: 8px; }
  .tab span { flex: 1; min-width: 0; overflow: hidden; white-space: nowrap; mask-image: linear-gradient(90deg, #000 55%, transparent); }
  .tab button { width: 16px; height: 16px; margin-left: 4px; }
  .tab.active { background: #f7f7f7; color: #333; border-radius: 8px 8px 0 0; }
  .sentry-dark { color: #424045; }
  .zalo { font: bold 6px "Liberation Sans", sans-serif; fill: #1668ff; }
  .htg { font: bold 7px "Liberation Sans", sans-serif; fill: #fff; }
  .window-controls { width: 242px; flex: none; display: flex; align-items: center; justify-content: space-between; padding: 0 13px 0 14px; }
  .buttons { display: flex; align-items: center; gap: 20px; }
  .buttons button { width: 20px; height: 20px; }
  .buttons .close { background: #e2522a; border-radius: 50%; }

  .toolbar { height: 39px; background: #f7f7f7; border-bottom: 1px solid #c0c0c0; display: flex; align-items: center; gap: 16px; padding: 0 13px 0 14px; color: #404040; }
  .omnibox { flex: 1; height: 30px; background: #fff; border-radius: 15px; display: flex; align-items: center; gap: 8px; padding: 0 10px; margin-left: -2px; }
  .url { flex: 1; color: #6f7377; }
  .url b { font-weight: 400; color: #000; }
  .omni-actions { display: flex; gap: 16px; }
  .profile { display: flex; align-items: center; gap: 14px; margin-left: -2px; }
  .avatar { width: 22px; height: 22px; border-radius: 50%; background: #7620a2; color: #fff; font: 11px/22px Roboto, sans-serif; }

  .page { flex: 1; display: flex; position: relative; font: 15px/20px Roboto, sans-serif; color: #3e3446; }
  .sidebar { width: 220px; flex: none; background: linear-gradient(294deg, #2f1937 36%, #452650 92%); color: #9586a5; display: flex; flex-direction: column; padding: 18px 0 11px; }
  .org { align-self: stretch; align-items: flex-start; justify-content: flex-start; gap: 12px; padding: 0 19px; margin-bottom: 1px; }
  .org-avatar { flex: none; width: 32px; height: 32px; margin-top: 4px; border-radius: 4px; background: #e5604a; color: #fff; font-size: 17px; line-height: 32px; }
  .org-text { display: grid; text-align: left; line-height: 18px; }
  .org-text strong { display: flex; align-items: center; gap: 6px; color: #fff; font-weight: 500; font-size: 17px; }
  .org-text small { font-size: 14px; }
  .nav-group { margin-top: 16px; }
  .nav-group.bottom { margin-top: auto; }
  .nav-item { height: 30px; padding: 0 20px 0 25px; display: flex; align-items: center; gap: 18px; position: relative; }
  .nav-item.current { color: #fff; }
  .nav-item.current::before, .subnav .current::before { content: ""; position: absolute; left: 0; top: 5px; width: 4px; height: 20px; border-radius: 0 2px 2px 0; background: #6c5fc7; }
  .beta { margin-left: auto; height: 16px; padding: 0 6px; border-radius: 8px; background: linear-gradient(90deg, #6c5fc7, #e1458f); color: #fff; font: 11px/16px Roboto, sans-serif; }

  .app { flex: 1; min-width: 0; display: flex; flex-direction: column; background: #fafafc; }
  .app-header { height: 61px; background: #fff; border-bottom: 1px solid #dbd6e1; display: flex; align-items: center; justify-content: space-between; padding: 0 30px; color: #80708f; }
  .crumbs { display: flex; align-items: center; gap: 8px; padding-bottom: 4px; }
  .search { width: 260px; height: 28px; border: 1px solid #d9d4e2; border-radius: 14px; display: flex; align-items: center; gap: 4px; padding: 0 9px; box-shadow: inset 0 2px 2px rgba(60, 40, 80, .04); }
  .search input { flex: 1; min-width: 0; border: 0; padding: 0; background: none; font: inherit; outline: 0; }
  .search input::placeholder { color: #80708f; opacity: 1; }
  .columns { flex: 1; display: flex; }
  .subnav { width: 220px; flex: none; background: #fff; border-right: 1px solid #dbd6e1; padding: 35px 0 0; color: #80708f; }
  .subnav section { margin-bottom: 18px; }
  .subnav h2 { margin: 0 0 3px 30px; font: 500 12px/20px Roboto, sans-serif; text-transform: uppercase; color: #3e3446; }
  .subnav a { display: block; padding: 5px 0 5px 30px; position: relative; }
  .subnav a.current { color: #3e3446; }

  main { flex: 0 1 1220px; min-width: 0; padding: 25px 30px; }
  .title-row { display: flex; justify-content: space-between; align-items: flex-start; height: 56px; }
  h1 { margin: 4px 0 0; font: 500 27px/32px Roboto, sans-serif; color: #2b2233; }
  .primary { height: 32px; padding: 0 13px 2px; border-radius: 5px; background: #7a6bc8; color: #fff; font-weight: 500; }
  .notice { display: flex; align-items: center; justify-content: space-between; gap: 16px; border: 1px dashed #f2cf85; border-radius: 4px; background: #faf3ea; padding: 14px 16px 17px; margin-bottom: 19px; }
  p { margin: 0 0 21px; }
  p a { color: #3c6fd9; }
  .panel { width: 100%; border: 1px solid #dbd6e1; border-radius: 5px; border-spacing: 0; background: #fff; box-shadow: 0 2px 1px rgba(43, 34, 51, .04); }
  .panel th { padding: 11px 16px 13px; text-align: left; text-transform: uppercase; font: 500 12px/20px Roboto, sans-serif; background: #fafafc; border-bottom: 1px solid #dbd6e1; border-radius: 5px 5px 0 0; }
  .panel td { padding: 29px 16px 32px; text-align: center; }

  footer { height: 58px; border-top: 1px solid #dbd6e1; display: grid; grid-template-columns: 1fr auto 1fr; align-items: center; padding: 0 30px 4px; color: #80708f; }
  .version { display: flex; gap: 17px; }
  .version a { font: 600 13px/20px Inter, sans-serif; }
  .foot-logo { width: 24px; height: 22px; }
  .migrate { justify-self: end; }

  .timer { position: absolute; right: 83px; bottom: 21px; width: 460px; height: 41px; background: #e7e7e7; box-shadow: 0 0 12px rgba(0, 0, 0, .35); display: flex; align-items: center; padding: 0 19px 0 6px; font: 14px/20px "Liberation Sans", sans-serif; color: #000; }
  .move { width: 23px; height: 23px; }
  .tl-logo { width: 32px; height: 29px; margin: 0 28px 0 7px; border-radius: 4px; background: #000; color: #fff; font: 500 23px/29px Roboto, sans-serif; text-align: center; }
  .task { color: #3d9a3f; white-space: nowrap; margin-right: 17px; }
  .stop { margin-left: auto; color: #dc143c; font-weight: 700; }
  .hide { margin-left: 33px; color: #b8860b; }
  .status { position: absolute; left: 0; bottom: 0; height: 22px; background: #323031; color: #eee; font: 15px/22px "Noto Sans", sans-serif; padding: 0 5px; border-radius: 0 4px 0 0; }

  .downloads { height: 61px; border-top: 1px solid #bcbcbc; background: #f7f7f7; display: flex; align-items: center; justify-content: space-between; padding: 0 13px 0 20px; color: #404040; }
  .file { width: 217px; height: 48px; border-right: 1px solid #c0c0c0; display: flex; align-items: center; gap: 13px; font-size: 15px; }
  .file button { margin: 0 18px 0 auto; }
  .download-actions { display: flex; align-items: center; gap: 13px; }
  .show-all { height: 34px; padding: 0 15px; border: 1px solid #bcbcbc; border-radius: 4px; font-weight: 600; color: #202124; }
</style>
